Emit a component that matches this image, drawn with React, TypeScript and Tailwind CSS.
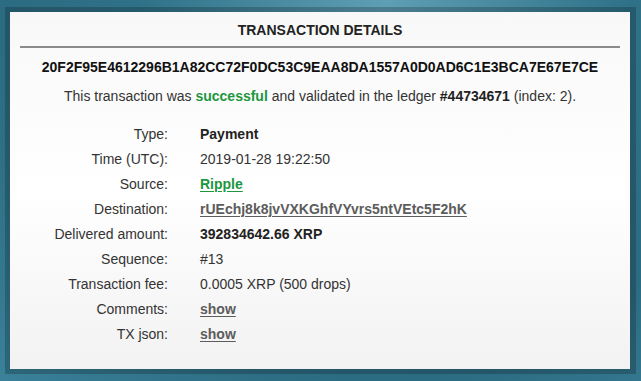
import React from 'react';

interface Row {
  label: string;
  value: string;
  kind?: 'bold' | 'plain' | 'green' | 'link';
}

const ROWS: Row[] = [
  { label: 'Type:', value: 'Payment', kind: 'bold' },
  { label: 'Time (UTC):', value: '2019-01-28 19:22:50' },
  { label: 'Source:', value: 'Ripple', kind: 'green' },
  { label: 'Destination:', value: 'rUEchj8k8jvVXKGhfVYvrs5ntVEtc5F2hK', kind: 'link' },
  { label: 'Delivered amount:', value: '392834642.66 XRP', kind: 'bold' },
  { label: 'Sequence:', value: '#13' },
  { label: 'Transaction fee:', value: '0.0005 XRP (500 drops)' },
  { label: 'Comments:', value: 'show', kind: 'link' },
  { label: 'TX json:', value: 'show', kind: 'link' },
];

const valueClass = (kind?: Row['kind']) => {
  switch (kind) {
    case 'bold':
      return 'font-bold text-[#222]';
    case 'green':
      return 'font-bold text-[#1d9640] underline underline-offset-2';
    case 'link':
      return 'font-bold text-[#5c5c5c] underline underline-offset-2';
    default:
      return 'text-[#333]';
  }
};

export default function App() {
  return (
    <div
      className="w-[641px] h-[381px] overflow-hidden pt-[7px] pl-[5px] bg-[radial-gradient(ellipse_at_60%_0%,#5e9fb4_0%,#2f7187_45%,#2c6c82_70%,#3a8199_100%)]"
      style={{ fontFamily: '"Liberation Sans", Arial, sans-serif' }}
    >
      <div className="w-[631px] h-[367px] p-[5px] bg-black/20">
        <div className="w-[620px] h-[357px] bg-gradient-to-b from-[#f8f8f8] via-white to-[#f2f2f2]">
          <div className="pt-[10px] text-center text-[14px] leading-[16px] font-bold text-[#222]">
            TRANSACTION DETAILS
          </div>
          <div className="mx-[10px] mt-[8px] h-[2px] bg-[#8a8a8a]" />
          <div className="mt-[11px] text-center text-[14px] leading-[16px] font-bold text-[#111]">
            20F2F95E4612296B1A82CC72F0DC53C9EAA8DA1557A0D0AD6C1E3BCA7E67E7CE
          </div>
          <div className="mt-[11px] text-center text-[14px] leading-[20px] text-[#333]">
            This transaction was <span className="font-bold text-[#1d9640]">successful</span> and
            validated in the ledger <span className="font-bold text-[#222]">#44734671</span> (index: 2).
          </div>
          <div className="mt-[16px] grid grid-cols-[158px_1fr] gap-x-[32px] text-[14px]">
            {ROWS.map((row) => (
              <React.Fragment key={row.label}>
                <div className="h-[25px] leading-[25px] text-right text-[#333]">{row.label}</div>
                <div className={`h-[25px] leading-[25px] ${valueClass(row.kind)}`}>{row.value}</div>
              </React.Fragment>
            ))}
          </div>
        </div>
      </div>
    </div>
  );
}
